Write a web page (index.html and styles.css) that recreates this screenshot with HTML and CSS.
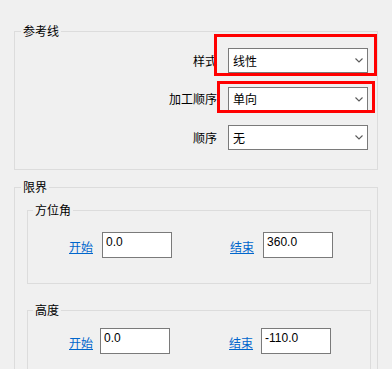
FILE: index.html
```html
<!DOCTYPE html>
<html lang="zh">
<head>
    <meta charset="UTF-8">
    <title>参考线设置</title>
    <link rel="stylesheet" href="styles.css">
</head>
<body>
    <!-- 参考线 -->
    <fieldset class="group group-ref">
        <legend>参考线</legend>
        <div class="form-grid">
            <span class="label">样式</span>
            <span class="cell">
                <span class="combo"><span>线性</span><svg class="chev" width="8" height="5" viewBox="0 0 8 5"><polyline points="0.5,0.5 4,4 7.5,0.5"/></svg></span>
                <span class="mark mark-style"></span>
            </span>

            <span class="label">加工顺序</span>
            <span class="cell">
                <span class="combo"><span>单向</span><svg class="chev" width="8" height="5" viewBox="0 0 8 5"><polyline points="0.5,0.5 4,4 7.5,0.5"/></svg></span>
                <span class="mark mark-order"></span>
            </span>

            <span class="label">顺序</span>
            <span class="cell">
                <span class="combo"><span>无</span><svg class="chev" width="8" height="5" viewBox="0 0 8 5"><polyline points="0.5,0.5 4,4 7.5,0.5"/></svg></span>
            </span>
        </div>
    </fieldset>

    <!-- 限界 -->
    <fieldset class="group group-limit">
        <legend>限界</legend>

        <fieldset class="sub sub-azimuth">
            <legend>方位角</legend>
            <div class="range-row">
                <a href="#" class="link">开始</a>
                <input type="text" class="num" value="0.0">
                <a href="#" class="link end">结束</a>
                <input type="text" class="num" value="360.0">
            </div>
        </fieldset>

        <fieldset class="sub sub-height">
            <legend>高度</legend>
            <div class="range-row tight">
                <a href="#" class="link">开始</a>
                <input type="text" class="num" value="0.0">
                <a href="#" class="link end">结束</a>
                <input type="text" class="num" value="-110.0">
            </div>
        </fieldset>
    </fieldset>
</body>
</html>
```

FILE: styles.css
```css
html, body {
    margin: 0;
    height: 100%;
    overflow: hidden;
}
body {
    background: #f0f0f0;
    font-family: "Noto Sans CJK SC", "Liberation Sans", sans-serif;
    font-size: 12px;
    color: #000;
}

fieldset {
    border: 1px solid #dcdcdc;
    min-width: 0;
}
legend {
    font-size: 12px;
    line-height: 16px;
    padding: 0 2px;
}

/* 外层分组 */
.group {
    margin: 0 14px;
}
.group legend { margin-left: 6px; }

.group-ref {
    margin-top: 23px;
    padding: 9px 9px 19px 0;
}
.group-limit {
    margin-top: 9px;
    padding: 7px 6px 40px 12px;
}
.group-limit > legend { margin-left: -6px; }

.form-grid {
    display: grid;
    grid-template-columns: 1fr 140px;
    column-gap: 11px;
    row-gap: 13.5px;
    align-items: center;
}
.label {
    text-align: right;
    line-height: 16px;
}
.cell {
    position: relative;
    display: block;
}
.combo {
    box-sizing: border-box;
    height: 25px;
    border: 1px solid #7a7a7a;
    background: #fff;
    display: flex;
    align-items: center;
    justify-content: space-between;
    padding: 0 4px 0 4px;
    line-height: 16px;
}
.chev {
    display: block;
}
.chev polyline {
    fill: none;
    stroke: #5a5a5a;
    stroke-width: 1.1;
}

/* 红框标注 */
.mark {
    position: absolute;
    box-sizing: border-box;
    border: 3px solid #ff0000;
    pointer-events: none;
}
.mark-style {
    left: -14px;
    top: -14px;
    width: 163px;
    height: 42px;
}
.mark-order {
    left: -11px;
    top: -6px;
    width: 158px;
    height: 32px;
}

/* 内层分组 */
.sub {
    margin: 0;
    padding: 14px 0 25px 0;
}
.sub legend { margin-left: 5px; }
.sub-height {
    margin-top: 18px;
    padding-top: 10px;
}

.range-row {
    display: flex;
    align-items: center;
    padding-left: 41px;
}
.link {
    color: #0066cc;
    text-decoration: underline;
    line-height: 16px;
    padding-top: 3px;
    margin-right: 9px;
}
.link.end { margin-left: 58px; }
.tight .link { margin-right: 7px; }
.tight .link.end { margin-left: 59px; margin-right: 8px; }

.num {
    box-sizing: border-box;
    width: 70px;
    height: 26px;
    margin: 0;
    border: 1px solid #7a7a7a;
    background: #fff;
    padding: 1px 3px 7px 3px;
    font-family: "Liberation Sans", Arial, sans-serif;
    font-size: 12px;
    color: #000;
    outline: none;
}
```
